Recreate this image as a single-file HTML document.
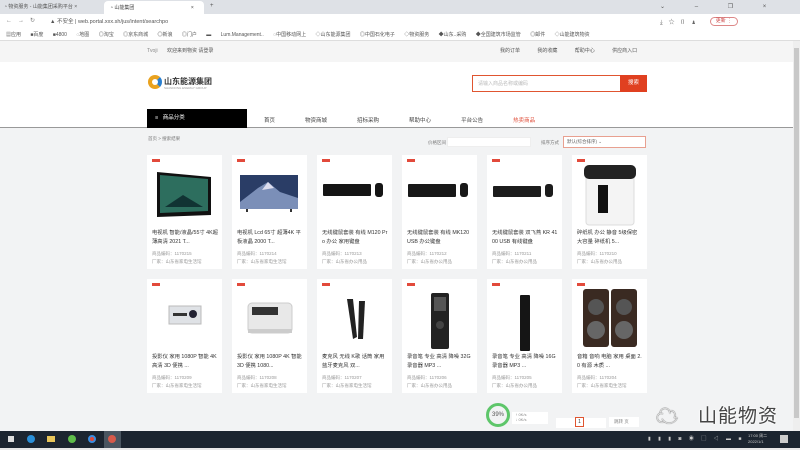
<!DOCTYPE html><html><head><meta charset="utf-8"><style>
*{margin:0;padding:0;box-sizing:border-box}
body{width:800px;height:450px;overflow:hidden;background:#f2f3f4;font-family:"Liberation Sans","Noto Sans CJK SC",sans-serif;position:relative;font-size:5px;color:#333}
.a{position:absolute}
.card{position:absolute;width:75px;height:114px;background:#fff}
.card .b{position:absolute;left:5px;top:4px;width:8px;height:3px;background:#e24a3b}
.card .t{position:absolute;left:5px;top:74px;width:66px;height:20px;font-size:5.3px;line-height:9px;color:#333;overflow:hidden;word-break:break-all}
.card .m{position:absolute;left:5px;top:95px;font-size:4.5px;line-height:8px;color:#999;white-space:nowrap}
</style></head><body>
<div class="a" style="left:0;top:0;width:800px;height:14px;background:#dee1e6"></div>
<div class="a" style="left:4px;top:3px;font-size:5px;color:#555">◔ 物资服务 - 山能集团采购平台 ×</div>
<div class="a" style="left:104px;top:1px;width:100px;height:13px;background:#fff;border-radius:4px 4px 0 0"></div>
<div class="a" style="left:110px;top:4px;font-size:5px;color:#444">◔ 山能集团 <span style="margin-left:55px">×</span></div>
<div class="a" style="left:210px;top:3px;font-size:6px;color:#555">+</div>
<div class="a" style="left:660px;top:3px;font-size:6px;color:#555;letter-spacing:14px">⌄ – ❐ ×</div>
<div class="a" style="left:0;top:14px;width:800px;height:14px;background:#fff"></div>
<div class="a" style="left:6px;top:17px;font-size:6px;color:#777;letter-spacing:6px">←→↻</div>
<div class="a" style="left:50px;top:17px;font-size:5.5px;color:#555">▲ 不安全 | web.portal.xxx.sh/jus/intent/searchpo</div>
<div class="a" style="left:710px;top:17px;width:28px;height:9px;border:1px solid #d88;border-radius:5px;color:#c44;font-size:5px;text-align:center;line-height:7px">更新 ⋮</div>
<div class="a" style="left:660px;top:17px;font-size:6px;color:#666;letter-spacing:6px">⤓☆▯♟</div>
<div class="a" style="left:0;top:28px;width:800px;height:13px;background:#fff;border-bottom:1px solid #ddd"></div>
<div class="a" style="left:6px;top:31px;font-size:5px;color:#555;white-space:nowrap;word-spacing:8px">▦应用 ■百度 ■4800 ◌地图 ◎淘宝 ◎京东商城 ◎新浪 ◎门户 ▬ Lum.Management.. ◌中国移动网上 ◇山东能源集团 ◎中国石化电子 ◇物资服务 ◆山东..采购 ◆全国建筑市场监管 ◎邮件 ◇山能建筑物资</div>
<div class="a" style="left:0;top:41px;width:793px;height:21px;background:#f5f5f5"></div>
<div class="a" style="left:147px;top:47px;font-size:5px;color:#888">Tvoji <span style="margin-left:8px;color:#555">欢迎来到物资 请登录</span></div>
<div class="a" style="left:500px;top:47px;font-size:5px;color:#555;word-spacing:16px">我的订单 我的收藏 帮助中心 供应商入口</div>
<div class="a" style="left:0;top:62px;width:793px;height:47px;background:#fff"></div>
<div class="a" style="left:148px;top:75px;width:14px;height:14px;border-radius:50%;border:4px solid #e9a21f;border-right-color:#2a7fd0"></div>
<div class="a" style="left:164px;top:76px;font-size:8px;color:#333;font-weight:bold">山东能源集团</div>
<div class="a" style="left:164px;top:86px;font-size:3px;color:#999">SHANDONG ENERGY GROUP</div>
<div class="a" style="left:472px;top:75px;width:149px;height:17px;border:1px solid #e05530;background:#fff"></div>
<div class="a" style="left:478px;top:80px;font-size:5px;color:#bbb">请输入商品名称或编码</div>
<div class="a" style="left:620px;top:75px;width:27px;height:17px;background:#e04020;color:#fff;font-size:5.5px;text-align:center;line-height:17px">搜索</div>
<div class="a" style="left:0;top:109px;width:793px;height:19px;background:#fff;border-bottom:1px solid #999"></div>
<div class="a" style="left:147px;top:109px;width:100px;height:19px;background:#000;color:#fff;font-size:5.5px;line-height:19px;padding-left:8px">≡ &nbsp;&nbsp;商品分类</div>
<div class="a" style="left:264px;top:116px;font-size:5.5px;color:#444;white-space:nowrap">首页<span style="margin-left:30px">物资商城</span><span style="margin-left:30px">招标采购</span><span style="margin-left:30px">帮助中心</span><span style="margin-left:30px">平台公告</span><span style="margin-left:30px;color:#e0503c">热卖商品</span></div>
<div class="a" style="left:148px;top:136px;font-size:4.5px;color:#777">首页 &gt; 搜索结果</div>
<div class="a" style="left:428px;top:140px;font-size:4.5px;color:#777">价格区间</div>
<div class="a" style="left:447px;top:137px;width:84px;height:10px;background:#fff;border:1px solid #eee"></div>
<div class="a" style="left:541px;top:140px;font-size:4.5px;color:#777">排序方式</div>
<div class="a" style="left:563px;top:136px;width:83px;height:12px;background:#fff;border:1px solid #e8a090;font-size:4.5px;color:#666;line-height:10px;padding-left:3px">默认(综合排序) ⌄</div>
<div class="card" style="left:147px;top:155px"><div class="b"></div>
<svg class="a" style="left:6px;top:12px" width="62" height="55"><polygon points="4,5 58,10 58,48 4,50" fill="#111"/><polygon points="7,8 55,12 55,44 7,46" fill="#2d6e5e"/><polygon points="12,40 30,28 50,40" fill="#133"/></svg>
<div class="t">电视机 智能/液晶/55寸 4K超薄高清 2021 T...</div><div class="m">商品编码：1170215<br>厂家：山东省家电生活馆</div></div>
<div class="card" style="left:232px;top:155px"><div class="b"></div>
<svg class="a" style="left:6px;top:15px" width="62" height="50"><rect x="2" y="5" width="58" height="34" fill="#2a3d66"/><polygon points="2,32 20,18 30,12 42,22 60,28 60,39 2,39" fill="#7b8fb8"/><polygon points="24,20 30,12 36,18" fill="#dde"/><rect x="8" y="39" width="2" height="3" fill="#333"/><rect x="52" y="39" width="2" height="3" fill="#333"/></svg>
<div class="t">电视机 Lcd 65寸 超薄4K 平板液晶 2000 T...</div><div class="m">商品编码：1170214<br>厂家：山东省家电生活馆</div></div>
<div class="card" style="left:317px;top:155px"><div class="b"></div>
<svg class="a" style="left:4px;top:25px" width="66" height="30"><rect x="2" y="4" width="48" height="12" rx="1" fill="#151515"/><rect x="54" y="3" width="8" height="14" rx="3" fill="#151515"/></svg>
<div class="t">无线键鼠套装 有线 M120 Pro 办公 家用键盘</div><div class="m">商品编码：1170213<br>厂家：山东省办公用品</div></div>
<div class="card" style="left:402px;top:155px"><div class="b"></div>
<svg class="a" style="left:4px;top:25px" width="66" height="30"><rect x="2" y="4" width="48" height="13" rx="1" fill="#181818"/><rect x="54" y="3" width="8" height="14" rx="3" fill="#181818"/></svg>
<div class="t">无线键鼠套装 有线 MK120 USB 办公键盘</div><div class="m">商品编码：1170212<br>厂家：山东省办公用品</div></div>
<div class="card" style="left:487px;top:155px"><div class="b"></div>
<svg class="a" style="left:4px;top:25px" width="66" height="30"><rect x="2" y="6" width="48" height="11" rx="1" fill="#1c1c1c"/><rect x="54" y="4" width="8" height="13" rx="3" fill="#1c1c1c"/></svg>
<div class="t">无线键鼠套装 双飞燕 KR 4100 USB 有线键盘</div><div class="m">商品编码：1170211<br>厂家：山东省办公用品</div></div>
<div class="card" style="left:572px;top:155px"><div class="b"></div>
<svg class="a" style="left:8px;top:6px" width="62" height="66"><rect x="6" y="14" width="48" height="50" rx="3" fill="#f4f4f4" stroke="#ddd"/><rect x="4" y="4" width="52" height="14" rx="5" fill="#222"/><rect x="18" y="24" width="10" height="28" fill="#111"/></svg>
<div class="t">碎纸机 办公 静音 5级保密 大容量 碎纸机 5...</div><div class="m">商品编码：1170210<br>厂家：山东省办公用品</div></div>
<div class="card" style="left:147px;top:279px"><div class="b"></div>
<svg class="a" style="left:8px;top:12px" width="60" height="50"><rect x="14" y="15" width="32" height="18" fill="#dfe2e6" stroke="#bbb"/><rect x="18" y="22" width="14" height="3" fill="#333"/><circle cx="38" cy="23" r="4" fill="#223"/></svg>
<div class="t">投影仪 家用 1080P 智能 4K 高清 3D 便携 ...</div><div class="m">商品编码：1170209<br>厂家：山东省家电生活馆</div></div>
<div class="card" style="left:232px;top:279px"><div class="b"></div>
<svg class="a" style="left:6px;top:10px" width="62" height="55"><rect x="10" y="14" width="44" height="30" rx="4" fill="#e8e8e8" stroke="#ccc"/><rect x="14" y="18" width="26" height="8" fill="#333"/><rect x="10" y="40" width="44" height="4" fill="#ccc"/></svg>
<div class="t">投影仪 家用 1080P 4K 智能 3D 便携 1080...</div><div class="m">商品编码：1170208<br>厂家：山东省家电生活馆</div></div>
<div class="card" style="left:317px;top:279px"><div class="b"></div>
<svg class="a" style="left:6px;top:8px" width="62" height="62"><polygon points="24,12 30,12 34,50 30,52" fill="#222"/><polygon points="36,14 42,14 40,52 35,52" fill="#222"/></svg>
<div class="t">麦克风 无线 K歌 话筒 家用 蓝牙麦克风 双...</div><div class="m">商品编码：1170207<br>厂家：山东省家电生活馆</div></div>
<div class="card" style="left:402px;top:279px"><div class="b"></div>
<svg class="a" style="left:6px;top:8px" width="62" height="64"><rect x="23" y="6" width="18" height="56" rx="2" fill="#222"/><rect x="26" y="10" width="12" height="14" fill="#555"/><circle cx="32" cy="38" r="4" fill="#444"/></svg>
<div class="t">录音笔 专业 高清 降噪 32G 录音器 MP3 ...</div><div class="m">商品编码：1170206<br>厂家：山东省办公用品</div></div>
<div class="card" style="left:487px;top:279px"><div class="b"></div>
<svg class="a" style="left:6px;top:8px" width="62" height="64"><rect x="27" y="8" width="10" height="56" rx="1" fill="#151515"/></svg>
<div class="t">录音笔 专业 高清 降噪 16G 录音器 MP3 ...</div><div class="m">商品编码：1170205<br>厂家：山东省办公用品</div></div>
<div class="card" style="left:572px;top:279px"><div class="b"></div>
<svg class="a" style="left:5px;top:6px" width="66" height="66"><rect x="6" y="4" width="26" height="58" rx="3" fill="#3a2a22"/><rect x="34" y="4" width="26" height="58" rx="3" fill="#3a2a22"/><circle cx="19" cy="22" r="8" fill="#555"/><circle cx="47" cy="22" r="8" fill="#555"/><circle cx="19" cy="45" r="9" fill="#666"/><circle cx="47" cy="45" r="9" fill="#666"/></svg>
<div class="t">音箱 音响 电脑 家用 桌面 2.0 有源 木质 ...</div><div class="m">商品编码：1170204<br>厂家：山东省家电生活馆</div></div>
<div class="a" style="left:486px;top:403px;width:24px;height:24px;border-radius:50%;border:3px solid #5ec66a;font-size:6px;line-height:18px;text-align:center;color:#555">39%</div>
<div class="a" style="left:512px;top:412px;width:36px;height:12px;background:#fff;font-size:4px;color:#888">&nbsp;&nbsp;&nbsp;↑ 0K/s<br>&nbsp;&nbsp;&nbsp;↓ 0K/s</div>
<div class="a" style="left:556px;top:418px;width:50px;height:10px;background:#fff"></div>
<div class="a" style="left:575px;top:417px;width:9px;height:10px;border:1px solid #e05530;font-size:5px;text-align:center;line-height:8px">1</div>
<div class="a" style="left:609px;top:417px;width:30px;height:10px;background:#fff;font-size:4.5px;color:#888;line-height:10px;padding-left:5px">跳转 页</div>
<div class="a" style="left:656px;top:399px;font-size:22px;color:#fff;text-shadow:0 0 1px #444,0 0 1px #444">☁</div>
<div class="a" style="left:698px;top:401px;font-size:19px;color:#444;text-shadow:0 0 2px #fff,0 0 2px #fff;letter-spacing:1px">山能物资</div>
<div class="a" style="left:793px;top:41px;width:7px;height:390px;background:#eee"></div>
<div class="a" style="left:794px;top:48px;width:5px;height:370px;background:#c8c8c8"></div>
<div class="a" style="left:0;top:431px;width:800px;height:17px;background:#1c2530"></div>
<div class="a" style="left:0;top:448px;width:800px;height:2px;background:#e8e8e8"></div>
<div class="a" style="left:8px;top:436px;width:6px;height:6px;background:#ddd"></div>
<div class="a" style="left:27px;top:435px;width:8px;height:8px;border-radius:50%;background:#2a8fd8"></div>
<div class="a" style="left:47px;top:436px;width:8px;height:6px;background:#e8c55a"></div>
<div class="a" style="left:68px;top:435px;width:8px;height:8px;border-radius:50%;background:#5ebd4a"></div>
<div class="a" style="left:88px;top:435px;width:8px;height:8px;border-radius:50%;background:#e04a3a;border:2px solid #3a8de0"></div>
<div class="a" style="left:104px;top:431px;width:17px;height:17px;background:#4a5560"></div>
<div class="a" style="left:108px;top:435px;width:8px;height:8px;border-radius:50%;background:#d85a4a"></div>
<div class="a" style="left:648px;top:435px;font-size:5px;color:#ccc;letter-spacing:3px">▮ ▮ ▮ ◙ ◉ ▢ ◁ ▬ ■</div>
<div class="a" style="left:748px;top:433px;font-size:4px;color:#ccc;line-height:6px">17:00 周二<br>2022/1/1</div>
<div class="a" style="left:780px;top:435px;width:8px;height:8px;background:#ccc"></div>
</body></html>
